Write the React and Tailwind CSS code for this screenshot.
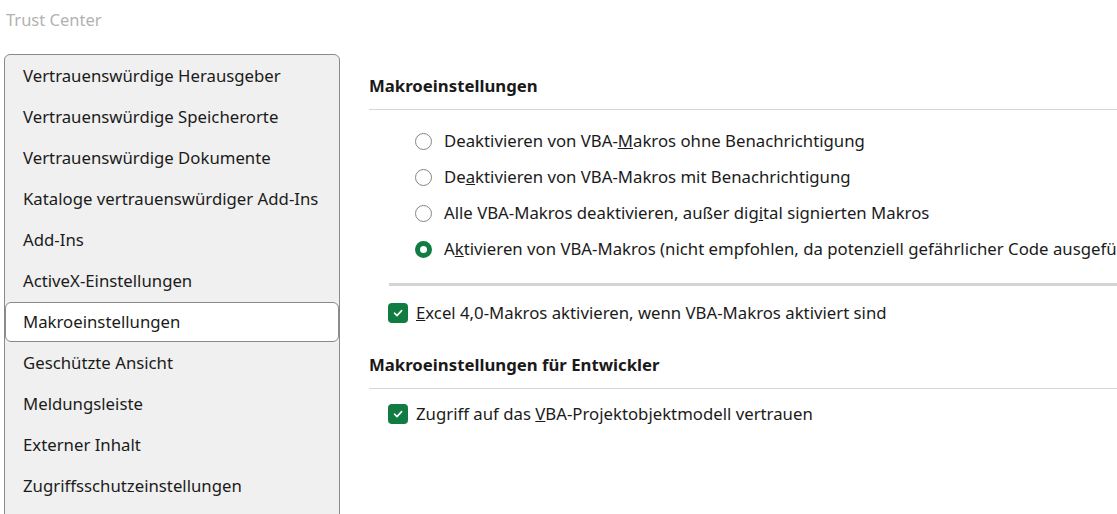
import React from 'react';

const navItems = [
  'Vertrauenswürdige Herausgeber',
  'Vertrauenswürdige Speicherorte',
  'Vertrauenswürdige Dokumente',
  'Kataloge vertrauenswürdiger Add-Ins',
  'Add-Ins',
  'ActiveX-Einstellungen',
  'Makroeinstellungen',
  'Geschützte Ansicht',
  'Meldungsleiste',
  'Externer Inhalt',
  'Zugriffsschutzeinstellungen',
];

const Radio = ({ checked }) =>
  checked ? (
    <span className="w-[17px] h-[17px] rounded-full border-[5px] border-[#107c41] bg-white shrink-0" />
  ) : (
    <span className="w-[17px] h-[17px] rounded-full border-[1.5px] border-[#858585] bg-white shrink-0" />
  );

const Checkbox = () => (
  <span className="w-[20px] h-[20px] rounded-[4px] bg-[#107c41] flex items-center justify-center shrink-0">
    <svg width="12" height="12" viewBox="0 0 12 12" fill="none">
      <path d="M2.5 6.2 L5 8.6 L9.6 3.6" stroke="white" strokeWidth="1.6" strokeLinecap="round" strokeLinejoin="round" />
    </svg>
  </span>
);

const RadioRow = ({ checked, children }) => (
  <div className="h-[36px] flex items-center pl-[46px] gap-[12px] whitespace-nowrap">
    <Radio checked={checked} />
    <span>{children}</span>
  </div>
);

const CheckRow = ({ children, className = '' }) => (
  <div className={`h-[36px] flex items-center pl-[19px] gap-[8px] whitespace-nowrap ${className}`}>
    <Checkbox />
    <span>{children}</span>
  </div>
);

const App = () => {
  return (
    <div className="w-[1117px] h-[514px] overflow-hidden bg-white text-[#1b1b1b] text-[16.75px] font-['Segoe_UI','Noto_Sans',sans-serif]">
      <div className="h-[40px] pl-[6px] flex items-center text-[#b2b2b2] text-[16.5px]">Trust Center</div>

      <div className="flex mt-[14px]">
        <div className="ml-[4px] w-[336px] h-[480px] shrink-0 border border-[#8a8a8a] rounded-[6px] bg-[#f0f0f0] pt-[1px]">
          {navItems.map((item) => (
            <div key={item} className="h-[41px]">
              <div
                className={
                  item === 'Makroeinstellungen'
                    ? 'h-[40px] flex items-center px-[17px] whitespace-nowrap bg-white border border-[#8a8a8a] rounded-[6px]'
                    : 'h-[40px] flex items-center px-[17px] whitespace-nowrap border border-transparent'
                }
              >
                {item}
              </div>
            </div>
          ))}
        </div>

        <div className="ml-[29px] flex-1 flex flex-col overflow-hidden">
          <div className="mt-[20px] h-[24px] flex items-center font-bold text-[#1a1a1a]">Makroeinstellungen</div>
          <div className="mt-[11px] h-px bg-[#d6d6d6]" />

          <div className="mt-[13px]">
            <RadioRow>
              Deaktivieren von VBA-<u>M</u>akros ohne Benachrichtigung
            </RadioRow>
            <RadioRow>
              De<u>a</u>ktivieren von VBA-Makros mit Benachrichtigung
            </RadioRow>
            <RadioRow>
              Alle VBA-Makros deaktivieren, außer dig<u>i</u>tal signierten Makros
            </RadioRow>
            <RadioRow checked>
              A<u>k</u>tivieren von VBA-Makros (nicht empfohlen, da potenziell gefährlicher Code ausgeführt werden kann)
            </RadioRow>
          </div>

          <div className="mt-[16px] ml-[20px] h-[3px] bg-[#d4d4d4]" />

          <CheckRow className="mt-[9px]">
            <u>E</u>xcel 4,0-Makros aktivieren, wenn VBA-Makros aktiviert sind
          </CheckRow>

          <div className="mt-[22px] h-[24px] flex items-center font-bold text-[#1a1a1a]">Makroeinstellungen für Entwickler</div>
          <div className="mt-[11px] h-px bg-[#d6d6d6]" />

          <CheckRow className="mt-[7px]">
            Zugriff auf das <u>V</u>BA-Projektobjektmodell vertrauen
          </CheckRow>
        </div>
      </div>
    </div>
  );
};

export default App;
